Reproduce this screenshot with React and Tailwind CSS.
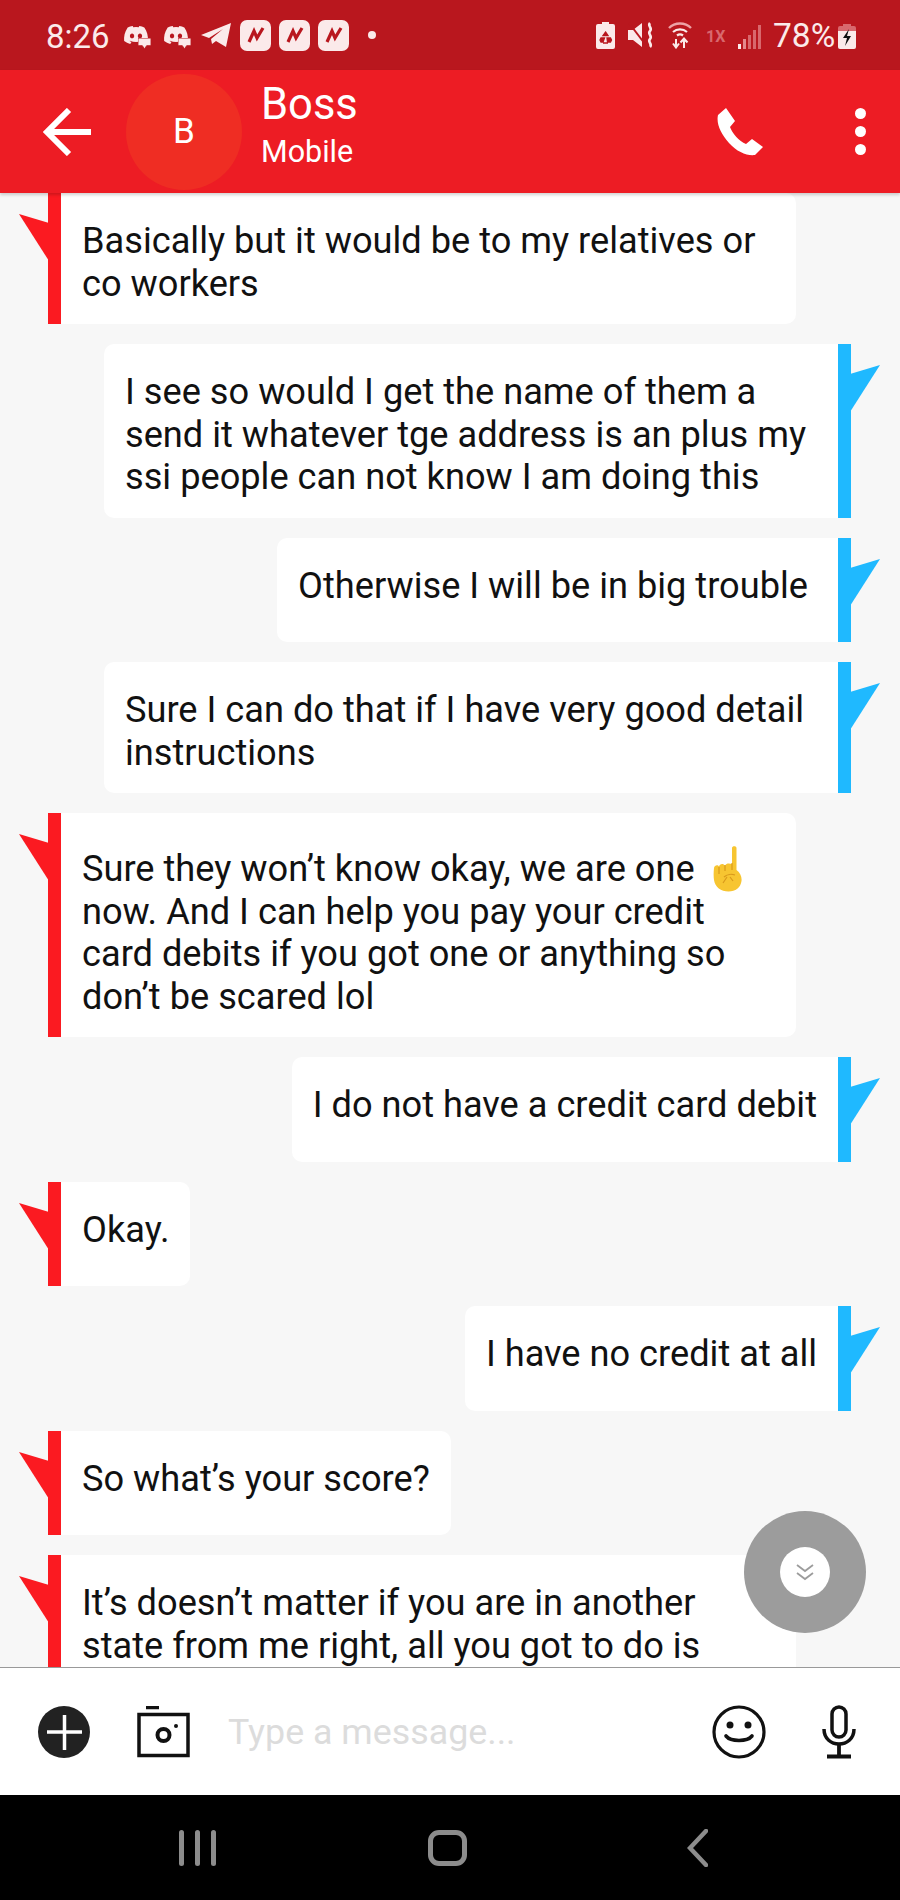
import React from 'react';
import { FaDiscord } from 'react-icons/fa';

const messages = [
  { id: 1, side: 'left', lines: ['Basically but it would be to my relatives or', 'co workers'] },
  { id: 2, side: 'right', lines: ['I see so would I get the name of them a', 'send it whatever tge address is an plus my', 'ssi people can not know I am doing this'] },
  { id: 3, side: 'right', lines: ['Otherwise I will be in big trouble'] },
  { id: 4, side: 'right', lines: ['Sure I can do that if I have very good detail', 'instructions'] },
  { id: 5, side: 'left', emoji: true, lines: ['Sure they won’t know okay, we are one', 'now. And I can help you pay your credit', 'card debits if you got one or anything so', 'don’t be scared lol'] },
  { id: 6, side: 'right', lines: ['I do not have a credit card debit'] },
  { id: 7, side: 'left', lines: ['Okay.'] },
  { id: 8, side: 'right', lines: ['I have no credit at all'] },
  { id: 9, side: 'left', lines: ['So what’s your score?'] },
  { id: 10, side: 'left', lines: ['It’s doesn’t matter if you are in another', 'state from me right, all you got to do is'] },
];

const PointingEmoji = () => (
  <svg viewBox="0 0 30 46" className="inline-block w-[30px] h-[46px] ml-[18px] -mt-[4px] align-middle">
    <path d="M19 2c0-2.500 4.500-2.500 4.500 0v22c4 3 5.500 7 5 11-.8 6.500-6 10.500-13 10.500C8 45.500 2 41 1 34c-.5-3-.5-8 0-12 .5-3 4-3.500 5-1.500.5-3 4.500-3.500 6-1 1-2.500 4.500-2.500 7-1.500z" fill="#f7c531" />
    <path d="M6 21v7M12 19v6M19 17v7M11 31c3-3 8-3 11-2M14 31l-4 6M17 31l3 4" stroke="#d99a1c" strokeWidth="1.200" fill="none" />
  </svg>
);

const Bubble = ({ msg }) => {
  const isLeft = msg.side === 'left';
  return (
    <div className={`flex shrink-0 ${isLeft ? 'justify-start pl-[48px]' : 'justify-end pr-[49px]'}`}>
      {isLeft && <div className="relative w-[13px] bg-[#fb1a21] shrink-0">
        <svg viewBox="0 0 30 48" className="absolute right-[12px] top-[21px] w-[30px] h-[48px]">
          <path d="M0 0 L30 9 L30 47 Z" fill="#fb1a21" />
        </svg>
      </div>}
      <div className={`bg-white min-h-[104.500px] pl-[21px] pb-[19px] text-[36.200px] leading-[42.500px] text-[#111] whitespace-nowrap ${msg.emoji ? 'pt-[35px]' : 'pt-[27px]'} ${msg.id === 3 ? 'pr-[30px]' : 'pr-[21px]'} ${msg.emoji || msg.id === 1 || msg.id === 10 ? 'w-[735px]' : ''} ${isLeft ? 'rounded-r-[10px]' : 'rounded-l-[10px]'} ${msg.id === 2 || msg.id === 4 ? 'w-[734px]' : ''}`}>
        {msg.lines.map((line, i) => (
          <div key={i} className={i === 0 && msg.emoji ? 'h-[42.500px]' : ''}>
            {line}
            {i === 0 && msg.emoji && <PointingEmoji />}
          </div>
        ))}
      </div>
      {!isLeft && <div className="relative w-[13px] bg-[#1fb9ff] shrink-0">
        <svg viewBox="0 0 30 48" className="absolute left-[12px] top-[21px] w-[30px] h-[48px]">
          <path d="M30 0 L0 9 L0 47 Z" fill="#1fb9ff" />
        </svg>
      </div>}
    </div>
  );
};

const BoxIcon = () => (
  <div className="w-[31px] h-[31px] rounded-[7px] bg-[#fbeaea] flex items-center justify-center">
    <svg viewBox="0 0 24 24" className="w-[24px] h-[24px]">
      <path d="M5 19 L10 8 L13 15 L19 5" fill="none" stroke="#b9171e" strokeWidth="3.200" />
    </svg>
  </div>
);

const DiscordChat = () => (
  <div className="relative w-[27px] h-[24px]">
    <FaDiscord className="w-[26px] h-[24px] text-[#fbeaea]" />
    <svg viewBox="0 0 12 10" className="absolute -right-[1px] -bottom-[2px] w-[13px] h-[11px]">
      <path d="M0 0h12v7H8L6 10 4 7H0z" fill="#fbeaea" stroke="#b9171e" strokeWidth="0.800" />
    </svg>
  </div>
);

const StatusBar = () => (
  <div className="h-[70px] bg-[#b9171e] flex items-center pl-[46px] pr-[44px] text-[#fbeaea] shrink-0">
    <span className="text-[33px] leading-none w-[77px] pt-[2px]">8:26</span>
    <div className="flex items-center">
      <DiscordChat />
      <div className="ml-[13px]"><DiscordChat /></div>
      <svg viewBox="0 0 30 24" className="ml-[11px] w-[30px] h-[24px]">
        <path d="M0 12 L30 0 L25 24 L15 18 L11 21 L10 16 L22 6 L8 15 Z" fill="#fbeaea" />
      </svg>
      <div className="ml-[9px] flex gap-[8px]"><BoxIcon /><BoxIcon /><BoxIcon /></div>
      <div className="ml-[19px] w-[8px] h-[8px] rounded-full bg-[#fbeaea]" />
    </div>
    <div className="ml-auto flex items-center">
      <svg viewBox="0 0 19 27" className="w-[19px] h-[27px]">
        <path d="M6 0h7v2h4a2 2 0 0 1 2 2v21a2 2 0 0 1-2 2H2a2 2 0 0 1-2-2V4a2 2 0 0 1 2-2h4z" fill="#fbeaea" />
        <path d="M9.500 10l2.500 3.500H7zM5 16h3.500l-1.500 4H5l-1-2zM11 16h3.500l1 2-1 2h-3zM7 21h5" stroke="#b9171e" strokeWidth="1.300" fill="#b9171e" />
      </svg>
      <svg viewBox="0 0 27 26" className="ml-[13px] w-[27px] h-[26px]">
        <path d="M0 8h5L14 1v24L5 18H0z" fill="#fbeaea" />
        <path d="M1 1 L17 22" stroke="#b9171e" strokeWidth="2" />
        <path d="M22 1c-3 3 3 5 0 8s3 5 0 8 3 5 0 8" stroke="#fbeaea" strokeWidth="2.600" fill="none" />
      </svg>
      <svg viewBox="0 0 24 28" className="ml-[13px] w-[24px] h-[28px]">
        <path d="M1 7C7 1 17 1 23 7" stroke="#eda3a6" strokeWidth="2.400" fill="none" />
        <path d="M5 11c4-3.500 10-3.500 14 0" stroke="#fbeaea" strokeWidth="2.200" fill="none" />
        <path d="M9 14.500c2-1.500 4-1.500 6 0" stroke="#fbeaea" strokeWidth="2.200" fill="none" />
        <path d="M8 18v7M5 22.500l3 4 3-4M16 27v-9M12.500 21.500l3.500-4 3.500 4" stroke="#fbeaea" strokeWidth="2" fill="none" />
      </svg>
      <span className="ml-[14px] w-[19px] text-[16px] font-bold leading-none text-[#d8686d] mt-[4px]">1X</span>
      <div className="ml-[13px] flex items-end gap-[2px] h-[24px] mt-[4px]">
        <div className="w-[3px] h-[5px] bg-[#fbeaea]" />
        <div className="w-[3px] h-[10px] bg-[#e4898d]" />
        <div className="w-[3px] h-[14px] bg-[#d8686d]" />
        <div className="w-[3px] h-[19px] bg-[#d8686d]" />
        <div className="w-[3px] h-[24px] bg-[#d8686d]" />
      </div>
      <span className="ml-[12px] text-[33.500px] leading-none w-[64px] pt-[2px]">78%</span>
      <div className="relative w-[18px] h-[25px] ml-[1px] mt-[3px]">
        <svg viewBox="0 0 18 25" className="w-[18px] h-[25px]">
          <path d="M5 0h8v2h3a2 2 0 0 1 2 2v3H0V4a2 2 0 0 1 2-2h3z" fill="#d8686d" />
          <path d="M0 7h18v16a2 2 0 0 1-2 2H2a2 2 0 0 1-2-2z" fill="#fbeaea" />
          <path d="M11 5L5 14h4l-2 8 6-10H9z" fill="#111" />
        </svg>
      </div>
    </div>
  </div>
);

const Header = () => (
  <div className="relative z-10 h-[123px] bg-[#ed1c24] flex items-center pl-[43px] pr-[34px] shrink-0 text-white shadow-[0_2px_3px_rgba(0,0,0,0.18)]">
    <svg viewBox="0 0 49 48" className="w-[49px] h-[48px]">
      <path d="M48 24H5M26 2L4 24l22 22" stroke="#fff" strokeWidth="6" fill="none" />
    </svg>
    <div className="ml-[34px] w-[116px] h-[116px] rounded-full bg-[#ef2d23] flex items-center justify-center text-[35px] leading-none">B</div>
    <div className="ml-[19px] -mt-[13px] flex flex-col">
      <span className="text-[43.500px] leading-[48px]">Boss</span>
      <span className="text-[30.500px] leading-[36px] mt-[5px]">Mobile</span>
    </div>
    <svg viewBox="0 0 46 48" className="ml-auto w-[46px] h-[48px]">
      <path d="M9 0L18 13L13 19C15 25 22 33 29 36L35 31L46 39L38 47C30 48 20 44 12 35C4 26-1 16 1 7Z" fill="#fff" />
    </svg>
    <div className="ml-[92px] flex flex-col gap-[7px]">
      <div className="w-[11px] h-[11px] rounded-full bg-white" />
      <div className="w-[11px] h-[11px] rounded-full bg-white" />
      <div className="w-[11px] h-[11px] rounded-full bg-white" />
    </div>
  </div>
);

const InputBar = () => (
  <div className="h-[128px] bg-white border-t border-[#999] flex items-center shrink-0 pl-[38px] pr-[44px]">
    <svg viewBox="0 0 52 52" className="w-[52px] h-[52px]">
      <circle cx="26" cy="26" r="26" fill="#222" />
      <path d="M9 26h35M26.500 9v35" stroke="#fff" strokeWidth="3.500" />
    </svg>
    <svg viewBox="0 0 53 52" className="ml-[47px] w-[53px] h-[52px]">
      <path d="M9 1.500h13" stroke="#111" strokeWidth="3.500" />
      <rect x="2" y="8.500" width="49" height="41" fill="none" stroke="#111" strokeWidth="3.500" />
      <circle cx="26.500" cy="29" r="6" fill="none" stroke="#111" strokeWidth="4" />
      <circle cx="39" cy="20" r="2" fill="#111" />
    </svg>
    <span className="ml-[38px] mt-[3px] text-[35.800px] leading-none text-[#dcdcdc]">Type a message...</span>
    <svg viewBox="0 0 54 54" className="ml-auto w-[54px] h-[54px]">
      <circle cx="27" cy="27" r="25" fill="none" stroke="#111" strokeWidth="3.200" />
      <circle cx="18" cy="20" r="3.500" fill="#111" />
      <circle cx="36" cy="20" r="3.500" fill="#111" />
      <path d="M14 31c5 6 21 6 26 0" fill="none" stroke="#111" strokeWidth="3.600" strokeLinecap="round" />
    </svg>
    <svg viewBox="0 0 34 54" className="ml-[56px] w-[34px] h-[54px]">
      <rect x="10" y="2" width="14" height="30" rx="7" fill="none" stroke="#111" strokeWidth="3.500" />
      <path d="M2 24c0 20 30 20 30 0" fill="none" stroke="#111" strokeWidth="3.500" />
      <path d="M17 40v10M5 51.500h24" stroke="#111" strokeWidth="3.800" />
    </svg>
  </div>
);

const NavBar = () => (
  <div className="h-[105px] bg-black shrink-0 flex items-center justify-between pl-[179px] pr-[192px]">
    <div className="flex gap-[11px]">
      <div className="w-[5px] h-[36px] rounded-full bg-[#8c8c8c]" />
      <div className="w-[5px] h-[36px] rounded-full bg-[#8c8c8c]" />
      <div className="w-[5px] h-[36px] rounded-full bg-[#8c8c8c]" />
    </div>
    <div className="mr-[8px] w-[39px] h-[36px] rounded-[11px] border-[5px] border-[#8c8c8c]" />
    <svg viewBox="0 0 21 38" className="w-[21px] h-[38px]">
      <path d="M19 2L3 19l16 17" stroke="#8c8c8c" strokeWidth="4.500" fill="none" strokeLinecap="round" />
    </svg>
  </div>
);

const App = () => {
  return (
    <div className="w-[900px] h-[1900px] flex flex-col overflow-hidden font-['Roboto',sans-serif]">
      <StatusBar />
      <Header />
      <div className="relative flex-1 min-h-0 bg-[#f7f7f7]">
        <div className="h-full overflow-hidden flex flex-col gap-[20px]">
          {messages.map((msg) => (
            <Bubble key={msg.id} msg={msg} />
          ))}
        </div>
        <div className="absolute left-[744px] top-[1318px] w-[122px] h-[122px] rounded-full bg-[#9c9c9c] flex items-center justify-center">
          <div className="w-[50px] h-[50px] rounded-full bg-white flex items-center justify-center">
            <svg viewBox="0 0 18 18" className="w-[18px] h-[18px]">
              <path d="M1 2l8 6 8-6M1 10l8 6 8-6" fill="none" stroke="#9c9c9c" strokeWidth="1.800" />
            </svg>
          </div>
        </div>
      </div>
      <InputBar />
      <NavBar />
    </div>
  );
};

export default App;
